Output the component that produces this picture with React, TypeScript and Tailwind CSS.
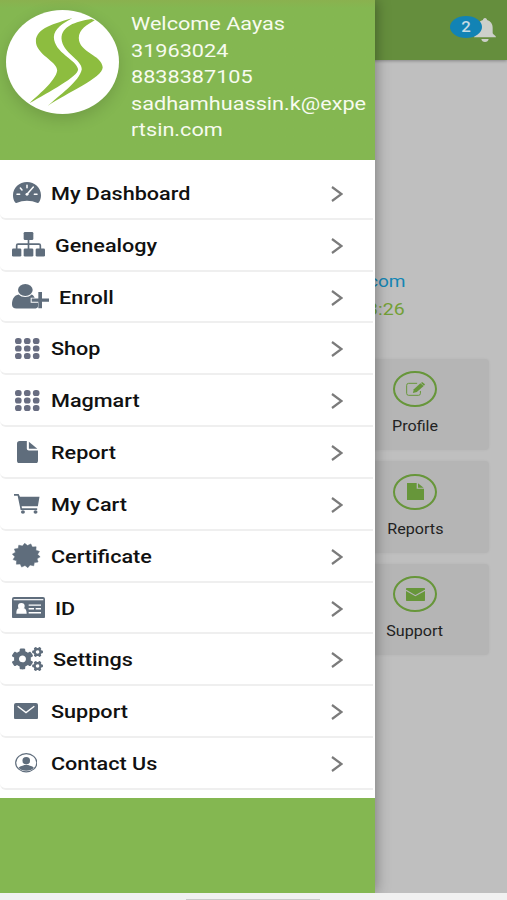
import type { ReactNode } from 'react';
import { FaCogs } from 'react-icons/fa';

interface MenuItem {
  label: string;
  icon: ReactNode;
  slot: string;
}

interface Tile {
  label: string;
  icon: ReactNode;
}

const burst = Array.from({ length: 28 }, (_, i) => {
  const r = i % 2 === 0 ? 49 : 40;
  const a = (Math.PI * i) / 14 + 0.11;
  return `${(50 + r * Math.cos(a)).toFixed(1)},${(50 + r * Math.sin(a)).toFixed(1)}`;
}).join(' ');

function Logo() {
  return (
    <svg viewBox="18 31 340 313" preserveAspectRatio="none" className="h-[104px] w-[113px]" fill="#8dbd3f">
      <path d="M218 55C165 72 108 85 108 125C108 165 172 185 172 213C168 245 110 290 88 312C150 275 235 232 235 209C230 180 163 160 162 112C163 88 190 70 218 55Z" />
      <path d="M275 58C225 66 185 80 185 117C187 160 246 180 246 209C240 245 175 290 143 320C200 280 309 235 309 203C306 165 238 160 237 115C237 90 262 75 285 62Z" />
    </svg>
  );
}

function DashboardIcon() {
  return (
    <svg viewBox="0 0 84 63" preserveAspectRatio="none" className="h-[21px] w-7">
      <path d="M42 0C65 0 84 17 84 40C84 48 82 55 78 61Q77 63 74 63Q42 49 10 63Q7 63 6 61C2 55 0 48 0 40C0 17 19 0 42 0Z" fill="currentColor" />
      <path
        d="M42 10V17M22 18L27 24M12 37H20M72 37H64"
        stroke="#fff"
        strokeWidth="4.5"
        strokeLinecap="round"
      />
      <path d="M61 15L42 37" stroke="#fff" strokeWidth="4.5" strokeLinecap="round" />
      <ellipse cx="42" cy="37" rx="4.5" ry="4" fill="#fff" />
    </svg>
  );
}

function GenealogyIcon() {
  return (
    <svg viewBox="0 0 99 73" preserveAspectRatio="none" className="h-[24.5px] w-[33px]" fill="currentColor">
      <rect x="35" y="0" width="29" height="24" rx="4" />
      <rect x="0" y="49" width="28" height="24" rx="4" />
      <rect x="35" y="49" width="29" height="24" rx="4" />
      <rect x="71" y="49" width="28" height="24" rx="4" />
      <path d="M49.5 22V51M14 51V40Q14 36 18 36H81Q85 36 85 40V51" fill="none" stroke="currentColor" strokeWidth="5" />
    </svg>
  );
}

function EnrollIcon() {
  return (
    <svg viewBox="0 0 111 73" preserveAspectRatio="none" className="h-[24.5px] w-[37px]" fill="currentColor">
      <ellipse cx="40" cy="18" rx="22" ry="18" />
      <path d="M20 31C7 33 0 44 0 61C0 69 5 73 13 73H67C73 73 77 71 78 67V56H56V41H68C66 36 63 32 59 31C50 41 29 41 20 31Z" />
      <path d="M79 24H90V43H111V53H90V72H79V53H59V43H79Z" />
    </svg>
  );
}

function AppsIcon() {
  return (
    <svg viewBox="0 0 74 63" preserveAspectRatio="none" className="h-[21px] w-[24.5px]" fill="#686d81">
      {[9, 31.5, 54].map((y) =>
        [10, 37, 64].map((x) => <rect key={`${x}-${y}`} x={x - 10} y={y - 9} width="20" height="18" rx="8.5" />)
      )}
    </svg>
  );
}

function ReportIcon() {
  return (
    <svg viewBox="0 0 62 67" preserveAspectRatio="none" className="h-[22.5px] w-[21px]" fill="currentColor">
      <path d="M8 0H29V23Q29 28 35 28H62V59Q62 67 53 67H9Q0 67 0 59V8Q0 0 8 0Z" />
      <path d="M35 2L60 23H35Z" />
    </svg>
  );
}

function CartIcon() {
  return (
    <svg viewBox="0 0 77 60" preserveAspectRatio="none" className="h-5 w-[25.5px]" fill="currentColor">
      <path d="M0 0H14L18 8H77L72 37H23L24 43H70V48H20L11 5H0Z" />
      <ellipse cx="27" cy="54" rx="6" ry="5.5" />
      <ellipse cx="65" cy="54" rx="6" ry="5.5" />
    </svg>
  );
}

function CertificateIcon() {
  return (
    <svg viewBox="0 0 100 100" preserveAspectRatio="none" className="h-[25px] w-[28.5px]" fill="currentColor">
      <polygon points={burst} stroke="currentColor" strokeWidth="2" strokeLinejoin="round" />
    </svg>
  );
}

function IdIcon() {
  return (
    <svg viewBox="0 0 99 64" preserveAspectRatio="none" className="h-[21.5px] w-[33px]">
      <rect width="99" height="64" rx="6" fill="currentColor" />
      <path d="M5 8H94" stroke="#fff" strokeWidth="3.5" />
      <g fill="#fff">
        <ellipse cx="28" cy="27" rx="10" ry="9.5" />
        <path d="M21 33C14 35 13 41 13 50H44C44 41 42 35 35 33C31 37 25 37 21 33Z" />
      </g>
      <path d="M50 24H87M50 35H66M71 35H87M50 47H87" stroke="#fff" strokeWidth="4" />
    </svg>
  );
}

function MailIcon() {
  return (
    <svg viewBox="0 0 72 50" preserveAspectRatio="none" className="h-[16.5px] w-6">
      <rect width="72" height="50" rx="6" fill="currentColor" />
      <path d="M11 10L36 29L61 10" fill="none" stroke="#fff" strokeWidth="4" />
    </svg>
  );
}

function ContactIcon() {
  return (
    <svg viewBox="0 0 68 58" preserveAspectRatio="none" className="h-[19.5px] w-[22.5px]" fill="currentColor">
      <ellipse cx="34" cy="29" rx="32" ry="27" fill="none" stroke="currentColor" strokeWidth="3.5" />
      <ellipse cx="34" cy="23" rx="11.5" ry="11" />
      <path d="M11 44C16 38 25 39 28 36H40C43 39 52 38 57 44C49 56 19 56 11 44Z" />
    </svg>
  );
}

const items: MenuItem[] = [
  { label: 'My Dashboard', slot: 'w-[51px] pl-[13px]', icon: <DashboardIcon /> },
  { label: 'Genealogy', slot: 'w-[55px] pl-3', icon: <GenealogyIcon /> },
  { label: 'Enroll', slot: 'w-[59px] pl-3', icon: <EnrollIcon /> },
  { label: 'Shop', slot: 'w-[51px] pl-[15px]', icon: <AppsIcon /> },
  { label: 'Magmart', slot: 'w-[51px] pl-[15px]', icon: <AppsIcon /> },
  { label: 'Report', slot: 'w-[51px] pl-[17px]', icon: <ReportIcon /> },
  { label: 'My Cart', slot: 'w-[51px] pl-3.5', icon: <CartIcon /> },
  { label: 'Certificate', slot: 'w-[50.5px] pl-3', icon: <CertificateIcon /> },
  { label: 'ID', slot: 'w-[55px] pl-3', icon: <IdIcon /> },
  {
    label: 'Settings',
    slot: 'w-[53px] pl-3',
    icon: <FaCogs preserveAspectRatio="none" className="h-6 w-[31px]" />,
  },
  { label: 'Support', slot: 'w-[51px] pl-3.5', icon: <MailIcon /> },
  { label: 'Contact Us', slot: 'w-[51px] pl-[14.5px]', icon: <ContactIcon /> },
];

const tiles: Tile[] = [
  {
    label: 'Profile',
    icon: (
      <svg viewBox="0 0 58 42" preserveAspectRatio="none" className="h-3.5 w-[19px]" fill="none" stroke="currentColor">
        <path d="M34 4H8Q2 4 2 10V34Q2 40 8 40H38Q44 40 44 34V27" strokeWidth="3" />
        <path d="M21 33L24 22L44 4L54 12L33 30Z" fill="currentColor" stroke="none" />
        <path d="M46 3L49 0L58 7L55 11Z" fill="currentColor" stroke="none" />
      </svg>
    ),
  },
  {
    label: 'Reports',
    icon: (
      <svg viewBox="0 0 51 50" preserveAspectRatio="none" className="h-[17px] w-[17px]" fill="currentColor">
        <path d="M0 0H29V17H51V50H0Z" />
        <path d="M33 1L50 14H33Z" />
      </svg>
    ),
  },
  {
    label: 'Support',
    icon: (
      <svg viewBox="0 0 57 39" preserveAspectRatio="none" className="h-[13px] w-[19px]">
        <rect width="57" height="39" rx="2" fill="currentColor" />
        <path d="M0 7L28 23L57 7" fill="none" stroke="#b5b5b5" strokeWidth="3.5" />
      </svg>
    ),
  },
];

function Drawer() {
  return (
    <aside className="flex h-[893px] w-[374.5px] flex-col bg-[#84b751] shadow-[0_0_14px_rgba(0,0,0,0.4)]">
      <div className="flex h-[159.5px] shrink-0 bg-gradient-to-b from-[#8ab14f] to-[#84b751] to-5% pt-2.5 pl-1.5">
        <div className="h-[104px] w-[113px] shrink-0 overflow-hidden rounded-[50%] bg-white shadow-[0_5px_16px_rgba(0,0,0,0.15)]">
          <Logo />
        </div>
        <div className="mt-px ml-3 flex flex-col items-start text-[18px] leading-[26.6px] text-[#f7fbef]">
          <span className="origin-left scale-x-[1.203]">Welcome Aayas</span>
          <span className="origin-left scale-x-[1.203]">31963024</span>
          <span className="origin-left scale-x-[1.203]">8838387105</span>
          <span className="origin-left scale-x-[1.203]">sadhamhuassin.k@expe</span>
          <span className="origin-left scale-x-[1.203]">rtsin.com</span>
        </div>
      </div>

      <nav className="flex h-[638.5px] shrink-0 flex-col bg-white pt-[8.5px] pr-0.5 pb-[8px]">
        {items.map((item) => (
          <div
            key={item.label}
            className="flex flex-1 items-center rounded-bl-md border-b-2 border-[#efefef] text-[#5f6d7c]"
          >
            <div className={`flex shrink-0 items-center ${item.slot}`}>{item.icon}</div>
            <span className="mt-px origin-left scale-x-[1.2] text-[18px] font-medium whitespace-nowrap text-[#111]">
              {item.label}
            </span>
            <svg
              viewBox="0 0 12 16"
              className="mt-0.5 mr-[30px] ml-auto h-4 w-3"
              fill="none"
              stroke="#7b7b7b"
              strokeWidth="2.2"
            >
              <path d="M1 1L10.5 8L1 15" />
            </svg>
          </div>
        ))}
      </nav>
    </aside>
  );
}

export default function App() {
  return (
    <div className="relative flex h-[900px] w-[507px] flex-col overflow-hidden bg-[#bfbfbf] font-[Roboto,sans-serif]">
      <header className="flex h-[59.5px] shrink-0 items-start justify-end bg-[#658e3d] pt-4 pr-[11px] shadow-[0_1px_3px_rgba(0,0,0,0.3)]">
        <span className="z-10 -mr-2 flex h-[22px] w-8 items-center justify-center rounded-[50%] bg-[#1283b5] text-[14px] font-medium text-[#c5dbe4]">
          <span className="scale-x-[1.2]">2</span>
        </span>
        <svg viewBox="0 0 66 72" preserveAspectRatio="none" className="mt-0.5 h-6 w-[22px] text-[#cdd0ca]" fill="currentColor">
          <path d="M33 0C37 0 39 3 39 6C50 9 56 18 56 29V45C56 50 66 52 66 58H0C0 52 10 50 10 45V29C10 18 16 9 27 6C27 3 29 0 33 0Z" />
          <path d="M22 63H44C43 69 39 72 33 72C27 72 23 69 22 63Z" />
        </svg>
      </header>

      <main className="flex flex-1 flex-col">
        <div className="mt-[207px] flex w-[405px] flex-col items-end text-[17px] leading-7">
          <span className="origin-right translate-x-px scale-x-[1.12] text-[#1586b4]">com</span>
          <span className="origin-right scale-x-[1.15] text-[#73a036]">3:26</span>
        </div>
        <div className="mt-9 ml-[341px] flex w-[148px] flex-col gap-[11px]">
          {tiles.map((tile) => (
            <div
              key={tile.label}
              className="flex h-[91.5px] flex-col items-center rounded bg-[#b5b5b5] pt-[12.5px] shadow-[0_0_3px_rgba(0,0,0,0.06)]"
            >
              <div className="flex h-9 w-[43.5px] items-center justify-center rounded-[50%] border-2 border-[#67963a] text-[#67963a]">
                {tile.icon}
              </div>
              <span className="mt-[9px] scale-x-[1.15] text-[14px] text-[#222]">{tile.label}</span>
            </div>
          ))}
        </div>
      </main>

      <footer className="flex h-[7px] shrink-0 items-end bg-[#f1f1f1]">
        <div className="ml-[186px] h-[1.5px] w-[134px] bg-[#c9c9c9]" />
      </footer>

      <div className="absolute inset-x-0 top-0 h-[893px] overflow-hidden">
        <Drawer />
      </div>
    </div>
  );
}
